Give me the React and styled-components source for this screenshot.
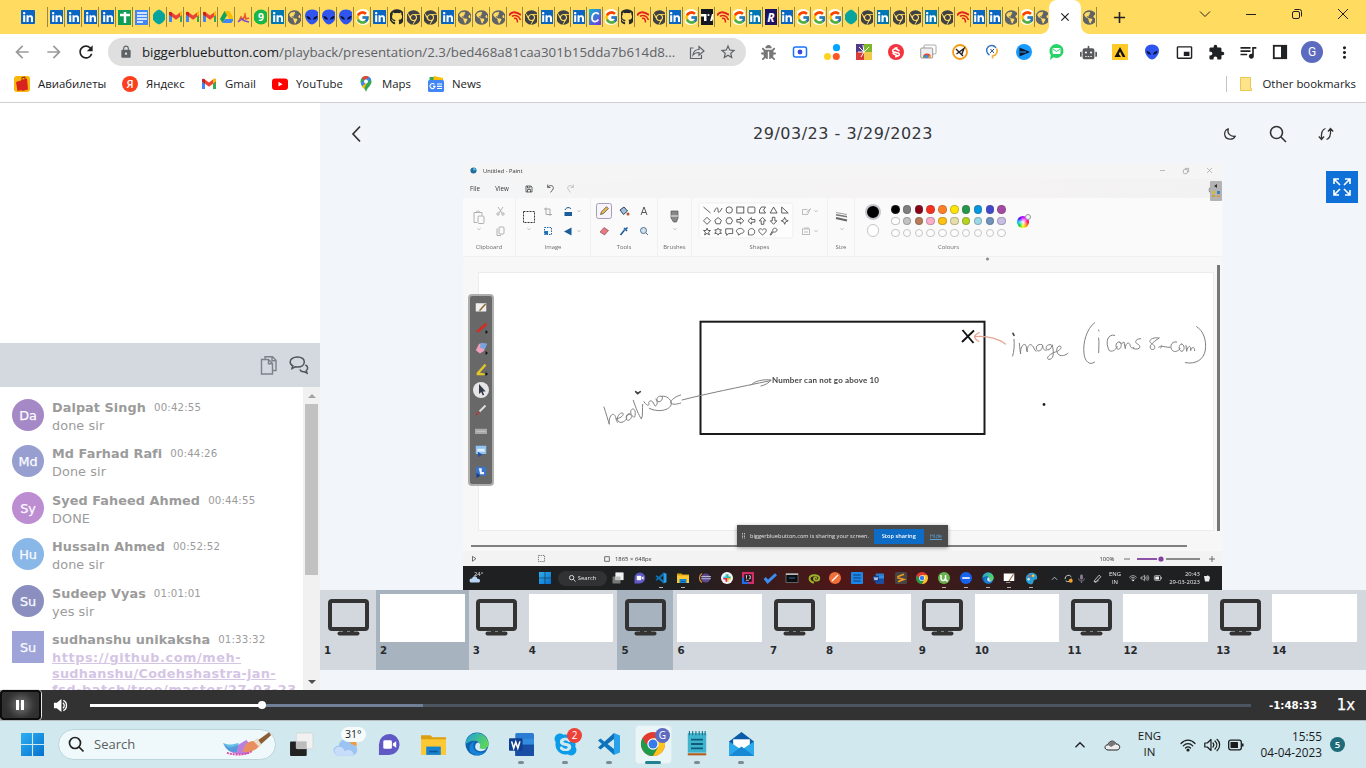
import React from "react";
import styled, { createGlobalStyle, css } from "styled-components";
import { FaLinkedin, FaGithub, FaChrome, FaGlobeAmericas, FaBug, FaRobot, FaSkype } from "react-icons/fa";
import { FcGoogle } from "react-icons/fc";
import {
  MdArrowBack, MdArrowForward, MdRefresh, MdLock, MdStarBorder, MdExtension,
  MdPictureInPictureAlt, MdQueueMusic, MdMoreVert, MdAdd, MdClose,
} from "react-icons/md";

const UI = `"Open Sans", "Noto Sans", sans-serif`;
const WEB = `"DejaVu Sans", sans-serif`;

const Global = createGlobalStyle`
  * { box-sizing: border-box; }
  body { margin: 0; background: #fff; font-family: ${UI}; overflow: hidden; }
  svg { display: block; flex: none; overflow: visible; }
`;

const Screen = styled.div`
  width: 1366px;
  height: 768px;
  display: flex;
  flex-direction: column;
  overflow: hidden;
`;

/* A centred box of fixed width, used in every bar. */
const Slot = styled.div`
  width: ${(p) => p.$w}px;
  height: ${(p) => (p.$h ? p.$h + "px" : "100%")};
  flex: none;
  display: flex;
  align-items: center;
  justify-content: center;
`;

/* ---------- small icons ---------- */
const I = ({ s = 16, w, h, box = "0 0 16 16", children, ...r }) => (
  <svg width={w || s} height={h || s} viewBox={box} fill="none" {...r}>{children}</svg>
);

const Gmail = ({ s = 16 }) => (
  <I s={s}>
    <path d="M1 4v9h3V7z" fill="#4285f4" /><path d="M15 4v9h-3V7z" fill="#34a853" />
    <path d="M1 4c0-1.4 1.4-1.6 2.3-1L8 6.6 12.7 3c.9-.6 2.3-.4 2.3 1v1.6L8 10.8 1 5.600z" fill="#ea4335" />
    <path d="M12 3.5v4l3-2.200V4c0-1.300-1.300-1.700-2.300-1z" fill="#fbbc04" /><path d="M1 4v1.500l3 2.200v-4C2.500 2.500 1 2.700 1 4z" fill="#c5221f" />
  </I>
);
const Sheets = () => <I><path d="M1 1h14v15H1z" fill="#109d58" /><path d="M3 6h10M8 3v11" stroke="#fff" strokeWidth="2.400" /></I>;
const Docs = () => <I><path d="M1 1h14v15H1z" fill="#4285f4" /><path d="M3 4h10M3 7h10M3 10h10M3 13h6" stroke="#fff" strokeWidth="1.500" /></I>;
const Hexa = () => <I><path d="M8 .5c3 1 4.500 3 6 5v5c-1.500 2-3 4-6 5-3-1-4.500-3-6-5v-5c1.500-2 3-4 6-5z" fill="#05a49d" /></I>;
const Drive = () => (
  <I><path d="M5.500 2h5L15 10h-5z" fill="#fbbc04" /><path d="M5.500 2 8 6.300 3.500 14 1 10z" fill="#12a25c" /><path d="M6 10h9l-2.500 4h-9z" fill="#4285f4" /></I>
);
const Runner = () => (
  <I><path d="M3 12 5 8l2 3 2-5 1 4 3-1" stroke="#e8552f" strokeWidth="1.600" /><path d="m2 13 4-3 3 2 4 1" stroke="#7a4fd0" strokeWidth="1.500" /><circle cx="9" cy="5" r="1.300" fill="#f08a24" /></I>
);
const Whats = () => (
  <I><circle cx="8" cy="8" r="7.500" fill="#19b648" /><text x="8" y="12" textAnchor="middle" fill="#fff" fontSize="10.500" fontWeight="700" fontFamily="Open Sans">9</text></I>
);
const Alien = ({ s = 16, c = "#2f55ee" }) => (
  <I s={s}><path d="M8 .5c5 0 7 3 7 6.500S11 15.500 8 15.500 1 10.500 1 7 3 .500 8 .500z" fill={c} /><path d="M2.500 7c2 0 4 1.500 4.500 3.500C4.500 11 2.700 9.500 2.500 7zM13.500 7c-2 0-4 1.500-4.500 3.500 2.500.500 4.300-1 4.500-3.500z" fill="#0a1030" /></I>
);
const RedWave = () => (
  <I><path d="M2 6.500C4 2.500 9 2 14 6" stroke="#e0231b" strokeWidth="2" /><path d="M5 7.500c2-2 7-1 8.500 3.500M7 9.500c2-1 3.500.5 3.500 4" stroke="#e0231b" strokeWidth="1.500" /></I>
);
const Canva = () => (
  <I><defs><linearGradient id="cv" x1="0" y1="0" x2="1" y2="1"><stop stopColor="#06c1cc" /><stop offset="1" stopColor="#7a2be2" /></linearGradient></defs>
    <rect width="16" height="16" rx="4" fill="url(#cv)" /><path d="M11.500 5.500C11 2.500 5 3.500 5 9c0 4.500 4.500 4.500 6.500 1.500" stroke="#fff" strokeWidth="1.700" /></I>
);
const Letter = ({ t, bg }) => (
  <I><rect width="16" height="16" fill={bg} /><text x="8" y="12.500" textAnchor="middle" fill="#fff" fontSize="12" fontStyle="italic" fontWeight="700" fontFamily="Open Sans">{t}</text></I>
);
const TV = () => <I><rect width="16" height="16" fill="#131722" /><path d="M2 5h5.500v7H5V7.500H2z" fill="#fff" /><circle cx="9.500" cy="6" r="1.100" fill="#fff" /><path d="M11 12h2.300l2-7H13z" fill="#fff" /></I>;

const InWrap = styled.span`
  display: flex;
  width: 14px;
  height: 14px;
  flex: none;
  color: ${(p) => p.$c};
  background: linear-gradient(#fff, #fff) center / 11px 11px no-repeat;
  align-items: center;
  justify-content: center;
`;
const White = styled.span`
  display: flex;
  flex: none;
  width: 16px;
  height: 16px;
  background: #fff;
  border-radius: 50%;
  align-items: center;
  justify-content: center;
`;

const FAVICONS = {
  in: <InWrap $c="#0a66c2"><FaLinkedin size={16} /></InWrap>,
  ib: <InWrap $c="#0077b5"><FaLinkedin size={16} /></InWrap>,
  sh: <Sheets />, dc: <Docs />, hx: <Hexa />, gm: <Gmail />, dr: <Drive />, rn: <Runner />, wa: <Whats />,
  gl: <FaGlobeAmericas size={15} color="#5f6368" />,
  al: <Alien />,
  gg: <White><FcGoogle size={15} /></White>,
  gh: <FaGithub size={16} color="#24292e" />,
  ch: <FaChrome size={15} color="#3f4145" />,
  rd: <RedWave />, cv: <Canva />, tv: <TV />, rr: <Letter t="R" bg="#1b1464" />,
};
const WIDE = "in in in in sh dc hx gm gm gm dr rn wa ib gl al al al gg in gh ch ch in gl gl gl".split(" ");
const NARROW = "rd ch in ch in cv gg gh rd ch in gg tv rd gg ib rr in gg gg gg hx ch ib ch ch ib ch rd in in gl gg".split(" ");

/* ---------- tab strip ---------- */
const TabStrip = styled.div`
  height: 34px;
  flex: none;
  background: #ffdc5f;
  display: flex;
  position: relative;
`;
const Tab = styled.div`
  width: ${(p) => p.$w}px;
  height: 34px;
  flex: none;
  display: flex;
  align-items: center;
  padding-left: ${(p) => p.$pad ?? 2}px;
  ${(p) => !p.$plain && css`
    background: linear-gradient(#9b8745, #9b8745) right top 7px / 1px 20px no-repeat;
  `}
`;
const Fav = styled.div`
  width: ${(p) => p.$w || 13}px;
  height: 16px;
  display: flex;
  align-items: center;
  justify-content: center;
  overflow: hidden;
`;
const ActiveTab = styled.div`
  width: 32px;
  height: 34px;
  flex: none;
  background: #fff;
  border-radius: 8px 8px 0 0;
  display: flex;
  align-items: center;
  justify-content: center;
  position: relative;
  &::before, &::after {
    content: "";
    position: absolute;
    bottom: 0;
    width: 8px;
    height: 8px;
  }
  &::before { left: -8px; background: radial-gradient(circle at 0 0, transparent 7.500px, #fff 8px); }
  &::after { right: -8px; background: radial-gradient(circle at 100% 0, transparent 7.500px, #fff 8px); }
`;
const Grow = styled.div`flex: 1;`;

function Tabs() {
  return (
    <TabStrip>
      <Tab $w={48} $pad={21}><Fav $w={14}>{FAVICONS.in}</Fav></Tab>
      {WIDE.map((k, i) => <Tab key={i} $w={17}><Fav>{FAVICONS[k]}</Fav></Tab>)}
      {NARROW.map((k, i) => <Tab key={i} $w={16}><Fav $w={12}>{FAVICONS[k]}</Fav></Tab>)}
      <Tab $w={14} $plain $pad={1}><Fav $w={12}>{FAVICONS.gl}</Fav></Tab>
      <ActiveTab><MdClose size={14} color="#222" /></ActiveTab>
      <Tab $w={16} $pad={2}><Fav $w={12}>{FAVICONS.gl}</Fav></Tab>
      <Slot $w={44}><MdAdd size={19} color="#222" /></Slot>
      <Grow />
      <Slot $w={46} $h={28}><I><path d="M3 5.500 8 10.500l5-5" stroke="#222" /></I></Slot>
      <Slot $w={46} $h={28}><I><path d="M3 8.500h10" stroke="#222" /></I></Slot>
      <Slot $w={46} $h={28}><I><rect x="3.500" y="5.500" width="7" height="7" rx="1.500" stroke="#222" /><path d="M5.500 3.500h5a2 2 0 0 1 2 2v5" stroke="#222" /></I></Slot>
      <Slot $w={46} $h={28}><I><path d="m3 3 10 10M13 3 3 13" stroke="#222" /></I></Slot>
    </TabStrip>
  );
}

/* ---------- address bar ---------- */
const Toolbar = styled.div`
  height: 36px;
  flex: none;
  display: flex;
  align-items: center;
  padding-left: 6px;
`;
const Omnibox = styled.div`
  width: 638px;
  height: 28px;
  margin-left: 6px;
  margin-right: 6px;
  border-radius: 14px;
  background: #dfdfdf;
  display: flex;
  align-items: center;
  padding-left: 10px;
`;
const Url = styled.div`
  width: 547px;
  font-size: 13.300px;
  white-space: nowrap;
  color: #5f6368;
  padding-left: 8px;
  letter-spacing: -0.010px;
  b { font-weight: 400; color: #202124; letter-spacing: -0.050px; }
`;
const Profile = styled.div`
  width: 22px;
  height: 22px;
  border-radius: 50%;
  background: #5c6bc0;
  color: #fff;
  display: flex;
  align-items: center;
  justify-content: center;
  font: 12px Roboto, sans-serif;
`;
const EXTENSIONS = [
  <FaBug size={15} color="#777" />,
  <I><rect x="1.500" y="3" width="13" height="10" rx="2" stroke="#1a73ff" strokeWidth="1.500" fill="#fff" /><circle cx="8" cy="8" r="2.400" fill="#3a49d8" /></I>,
  <I><circle cx="12.500" cy="3.700" r="3.600" fill="#00a4ff" /><circle cx="3.500" cy="12.500" r="3.500" fill="#ffd21f" /><circle cx="12.300" cy="12.500" r="3.500" fill="#ff5722" /></I>,
  <I><path d="M0 0h8v8H0z" fill="#503a86" /><path d="M8 0h8v8H8z" fill="#7cb62d" /><path d="M0 8h8v8H0z" fill="#d93a3a" /><path d="M8 8h8v8H8z" fill="#f2c74c" /><path d="M3 3l5 5M7 1l1 7 5-5M2 8h6M8 8l-3 5" stroke="#fff" /></I>,
  <I><circle cx="8" cy="8" r="8" fill="#f5333f" /><path d="M9.500 3.500 5.300 5.600c-1 .6-1 1.500 0 2.200l5.400 1.500c1 .6 1 1.600 0 2.200l-3.500 1.500M6.500 4l5 3M4.500 9l5 3" stroke="#fff" strokeWidth="1.500" /></I>,
  <I><rect x="4" y="1" width="12" height="9" rx="1" fill="#fff" stroke="#aaa" /><rect x=".7" y="4" width="12" height="10" rx="1" fill="#eee" stroke="#999" /><path d="M3 13.500a4 4 0 0 1 8 0" fill="#ea4335" /><path d="M3 13.500a4 4 0 0 1 1.200-2.800l1.500 2.800z" fill="#34a853" /><path d="M11 13.500a4 4 0 0 0-1-2.500l-2 2.500z" fill="#fbbc04" /><circle cx="7" cy="12.500" r="1.700" fill="#4285f4" /></I>,
  <I><circle cx="8" cy="8" r="7" stroke="#f59a16" strokeWidth="1.800" fill="#fff" /><path d="m4 5 7 7M4.500 10 12 4.500 9.500 11" stroke="#222" strokeWidth="1.400" /></I>,
  <I><path d="M5.500 11A5 5 0 1 1 12 4" stroke="#2e72c8" strokeWidth="1.400" /><path d="M12.500 4.500A5 5 0 0 1 8.500 12v2.500" stroke="#f3ab35" strokeWidth="1.600" /><path d="m6 9 4-4M6.500 5l3.500 4" stroke="#274f88" /></I>,
  <I><circle cx="8" cy="8" r="8" fill="#189aff" /><path d="M3.500 3.500 14 8 3.500 12.500z" fill="#0b1a33" /><path d="M4 8h6" stroke="#4f9fe8" /></I>,
  <I><path d="M8.500 0a7 7 0 1 1-3 13.300L2 16l.8-5A7 7 0 0 1 8.500 0z" fill="#25d366" /><rect x="4.500" y="4" width="8" height="6" rx="1" fill="#fff" /><path d="m5 5 3.500 2.500L12 5" stroke="#25d366" /></I>,
  <FaRobot size={17} color="#58595b" />,
  <I><rect width="16" height="16" fill="#ffc928" /><path d="M2.500 13 8 3l5.500 10h-2.800L8 7.500l-1.200 2.400L9 13z" fill="#111" /></I>,
  <Alien />,
  <MdPictureInPictureAlt size={17} color="#202124" />,
  <MdExtension size={17} color="#202124" />,
  <MdQueueMusic size={20} color="#202124" />,
  <I><rect x="1.800" y="1.800" width="12.400" height="12.400" stroke="#202124" strokeWidth="1.800" /><path d="M9 1h6v14H9z" fill="#202124" /></I>,
  <Profile>G</Profile>,
  <MdMoreVert size={19} color="#202124" />,
];

function AddressBar() {
  return (
    <Toolbar>
      <Slot $w={32}><MdArrowBack size={20} color="#9a9a9a" /></Slot>
      <Slot $w={32}><MdArrowForward size={20} color="#9a9a9a" /></Slot>
      <Slot $w={32}><MdRefresh size={20} color="#202124" /></Slot>
      <Omnibox>
        <Slot $w={16}><MdLock size={14} color="#5f6368" /></Slot>
        <Url><b>biggerbluebutton.com</b>/playback/presentation/2.3/bed468a81caa301b15dda7b614d8...</Url>
        <Slot $w={31}><I><path d="M4.500 4H1.500v10.500h11V11M4 11c.5-4 3-5.500 6-5.500V2.500L15 7l-5 4.300V8.500C7.500 8.500 5.500 9 4 11z" stroke="#5f6368" strokeWidth="1.200" /></I></Slot>
        <Slot $w={31}><MdStarBorder size={18} color="#5f6368" /></Slot>
      </Omnibox>
      {EXTENSIONS.map((e, i) => <Slot key={i} $w={32}>{e}</Slot>)}
    </Toolbar>
  );
}

/* ---------- bookmarks ---------- */
const Bookmarks = styled.div`
  height: 33px;
  flex: none;
  border-bottom: 1px solid #cfcfcf;
  display: flex;
  align-items: center;
  padding: 0 10px 4px 14px;
  font-size: 11.400px;
  color: #202124;
`;
const Bookmark = styled.div`
  width: ${(p) => (p.$w ? p.$w + "px" : "auto")};
  display: flex;
  align-items: center;
  gap: 8px;
  white-space: nowrap;
`;
const Label = styled.span`
  padding-bottom: 2px;
`;
const Rule = styled.div`
  width: 1px;
  height: 16px;
  background: #c4c4c4;
  margin-right: 11px;
`;
const Bags = () => <I><rect width="16" height="16" rx="3" fill="#f6b80c" /><path d="M2 6l5-1.500 1 9.500-4.500 1zM7 4l6-1.500 1 11-6 1.500z" fill="#d8231e" /><path d="M8 3.800V1.500l3-.5v2.200" stroke="#a2160f" /></I>;
const Yandex = () => <I><circle cx="8" cy="8" r="8" fill="#fc3f1d" /><text x="8" y="12" textAnchor="middle" fill="#fff" fontSize="11" fontWeight="600" fontFamily="Open Sans">Я</text></I>;
const YouTube = () => <I><rect y="2.500" width="16" height="11.500" rx="3" fill="#f00" /><path d="m6.500 5.800 4 2.400-4 2.400z" fill="#fff" /></I>;
const Maps = () => (
  <I><path d="M8 0a5.500 5.500 0 0 1 5.500 5.500C13.500 9.500 9.500 11 8 16c-1.500-5-5.500-6.500-5.500-10.500A5.500 5.500 0 0 1 8 0z" fill="#34a853" /><path d="M8 0a5.500 5.500 0 0 0-4.200 2L6.500 4.500 11 1A6 6 0 0 0 8 0z" fill="#ea4335" /><path d="M11 1a5.500 5.500 0 0 1 2 2.500L4 10.500 2.800 7z" fill="#4285f4" /><path d="m4 10.500 5.500-5L6 13z" fill="#fbbc04" /><circle cx="8" cy="5.500" r="2" fill="#fff" /></I>
);
const News = () => (
  <I><path d="M1.500 1h9v5h-9z" fill="#34a853" /><path d="m6 0 9 2v4H5z" fill="#fbbc04" /><rect y="4" width="16" height="12" rx="1.500" fill="#4285f4" /><path d="M6.500 8.500a2.500 2.500 0 1 0 .5 1.800H5M9 8h5M9 10.300h5M9 12.500h5" stroke="#fff" strokeWidth="1.200" /></I>
);
const Folder = () => <I><path d="M2.500 1.500h10v11h1v2h-11z" fill="#ffe38b" stroke="#e8c84e" /></I>;

const BookmarkBar = () => (
  <Bookmarks>
    <Bookmark $w={108}><Bags /><Label>Авиабилеты</Label></Bookmark>
    <Bookmark $w={79}><Yandex /><Label>Яндекс</Label></Bookmark>
    <Bookmark $w={71}><Gmail /><Label>Gmail</Label></Bookmark>
    <Bookmark $w={86}><YouTube /><Label>YouTube</Label></Bookmark>
    <Bookmark $w={70}><Maps /><Label>Maps</Label></Bookmark>
    <Bookmark $w={70}><News /><Label>News</Label></Bookmark>
    <Grow />
    <Rule />
    <Bookmark><Folder /><Label>Other bookmarks</Label></Bookmark>
  </Bookmarks>
);

/* ---------- chat panel ---------- */
const Page = styled.div`
  height: 587px;
  flex: none;
  display: flex;
  font-family: ${WEB};
`;
const Aside = styled.div`
  width: 320px;
  display: flex;
  flex-direction: column;
  background: #fff;
`;
const Webcam = styled.div`height: 240px; flex: none;`;
const AsideBar = styled.div`
  height: 44px;
  flex: none;
  background: #d4d9e0;
  display: flex;
  justify-content: flex-end;
  align-items: center;
  gap: 10px;
  padding-right: 11px;
`;
const Chat = styled.div`
  height: 303px;
  flex: none;
  display: flex;
  overflow: hidden;
`;
const Messages = styled.div`
  flex: 1;
  padding: 12px 0 0 12px;
`;
const Message = styled.div`
  display: flex;
  height: 46.400px;
  gap: 8px;
`;
const Avatar = styled.div`
  width: 32px;
  height: 32px;
  flex: none;
  border-radius: ${(p) => (p.$square ? 0 : "50%")};
  background: ${(p) => p.$c};
  color: #fbfbff;
  font-size: 12.800px;
  -webkit-text-stroke: 0.250px #fbfbff;
  display: flex;
  align-items: center;
  justify-content: center;
  padding-top: 1px;
`;
const Who = styled.div`
  height: 19px;
  line-height: 17px;
  display: flex;
  gap: 8px;
  white-space: nowrap;
  font-size: 12.800px;
  font-weight: 700;
  color: #9b9b9b;
  letter-spacing: 0.080px;
`;
const When = styled.span`
  font-size: 10.240px;
  font-weight: 400;
  letter-spacing: 0.150px;
`;
const Said = styled.div`
  font-size: 12.800px;
  line-height: 16px;
  color: #9b9b9b;
  letter-spacing: 0.100px;
`;
const Link = styled.a`
  display: block;
  font-weight: 700;
  color: #d5c5e5;
  text-decoration: underline;
  white-space: nowrap;
  letter-spacing: ${(p) => p.$ls}px;
`;
const Scroll = styled.div`
  width: 17px;
  background: #f1f1f1;
  display: flex;
  flex-direction: column;
  align-items: center;
  justify-content: space-between;
`;
const Thumb = styled.div`
  width: 13px;
  height: 171px;
  background: #c1c1c1;
`;
const CHAT = [
  ["Da", "#a589c6", "Dalpat Singh", "00:42:55", "done sir"],
  ["Md", "#979fd0", "Md Farhad Rafi", "00:44:26", "Done sir"],
  ["Sy", "#bd8dd1", "Syed Faheed Ahmed", "00:44:55", "DONE"],
  ["Hu", "#89b7e8", "Hussain Ahmed", "00:52:52", "done sir"],
  ["Su", "#8a8fbf", "Sudeep Vyas", "01:01:01", "yes sir"],
  ["Su", "#9ea4d7", "sudhanshu unikaksha", "01:33:32", null],
];

const ChatPanel = () => (
  <Aside>
    <Webcam />
    <AsideBar>
      <I s={20} box="0 0 20 20" stroke="#7c8289" strokeWidth="1.400"><path d="M6 4V1.700h7.500L17 5.200v10.300h-3M13 1.900V5.700h3.700" /><path d="M2.500 4.500h7l4 4v10.500h-11zM9.500 4.700v4h4" /></I>
      <I s={20} box="0 0 20 20" stroke="#4f5459" strokeWidth="1.500"><path d="M8.500 2c4.300 0 6.800 2.200 6.800 5s-2.500 5-6.800 5c-.8 0-1.500 0-2.200-.2L3 13.500l.8-2.800C2 10 1.200 8.600 1.200 7c0-2.800 3-5 7.300-5z" /><path d="M16.300 10c2.800 1.200 3 4 1 5.500l.7 2.500-2.700-1.300c-2.300.3-3.800-.5-4.500-2.200" /></I>
    </AsideBar>
    <Chat>
      <Messages>
        {CHAT.map(([ini, c, name, at, text], i) => (
          <Message key={i}>
            <Avatar $c={c} $square={!text}>{ini}</Avatar>
            <div>
              <Who>{name}<When>{at}</When></Who>
              <Said>
                {text || (
                  <>
                    <Link $ls={0.6}>https://github.com/meh-</Link>
                    <Link $ls={0.32}>sudhanshu/Codehshastra-jan-</Link>
                    <Link $ls={0.6}>fsd-batch/tree/master/27-03-23</Link>
                  </>
                )}
              </Said>
            </div>
          </Message>
        ))}
      </Messages>
      <Scroll>
        <Slot $w={17} $h={17}><I s={8} box="0 0 8 8"><path d="M0 6h8L4 2z" fill="#a3a3a3" /></I></Slot>
        <Thumb />
        <Grow />
        <Slot $w={17} $h={17}><I s={8} box="0 0 8 8"><path d="M0 2h8L4 6z" fill="#505050" /></I></Slot>
      </Scroll>
    </Chat>
  </Aside>
);

/* ---------- presentation ---------- */
const Stage = styled.div`
  flex: 1;
  background: #f2f5f9;
  display: flex;
  flex-direction: column;
  position: relative;
`;
const StageHead = styled.div`
  height: 61px;
  flex: none;
  display: flex;
  align-items: center;
  padding: 0 16px 0 17px;
  font-size: 16px;
  color: #34363a;
`;
const StageTitle = styled.div`
  flex: 1;
  text-align: center;
  padding-left: 103px;
  letter-spacing: 0.500px;
`;
const FullButton = styled.div`
  position: absolute;
  right: 8px;
  top: 68px;
  width: 32px;
  height: 32px;
  background: #0f70d7;
  display: flex;
  align-items: center;
  justify-content: center;
`;
const Thumbs = styled.div`
  height: 80px;
  flex: none;
  background: #d3d8df;
  display: flex;
`;
const ThumbItem = styled.div`
  width: ${(p) => (p.$screen ? 56 : 92.7)}px;
  height: 80px;
  flex: none;
  padding: 4px;
  background: ${(p) => (p.$on ? "#a7b4bf" : "transparent")};
  font-size: 10.240px;
  font-weight: 700;
  color: #26292d;
`;
const SlideBox = styled.div`
  height: 48px;
  margin-bottom: 2px;
  display: flex;
  align-items: center;
  justify-content: center;
  padding-bottom: ${(p) => (p.$screen ? 1 : 0)}px;
  background: ${(p) => (p.$screen ? "transparent" : "#fff")};
`;
const Monitor = () => (
  <svg width="41" height="37" viewBox="0 0 41 37" fill="none">
    <rect x="2" y="2" width="37" height="28" rx="2" stroke="#333" strokeWidth="4" />
    <path d="M17 31v4M24 31v4" stroke="#333" strokeWidth="4" />
    <rect x="9.500" y="32.500" width="22" height="4" rx="2" fill="#333" />
  </svg>
);

/* ---------- shared screen: Paint window ---------- */
const Video = styled.div`
  width: 759px;
  height: 426px;
  margin-left: 143px;
  flex: none;
  display: flex;
  flex-direction: column;
  position: relative;
  font-family: ${UI};
  color: #333;
  background: #f6f6f7;
  filter: blur(0.300px);
  overflow: hidden;
`;
const PaintTitle = styled.div`
  height: 15px;
  flex: none;
  display: flex;
  align-items: center;
  padding: 0 1px 2px 6px;
  background: #f5f5f6;
  font-size: 5.700px;
`;
const PaintMenu = styled.div`
  height: 19px;
  flex: none;
  display: flex;
  align-items: center;
  background: linear-gradient(90deg, #f4f5f6, #f5f3f3 60%, #f3f2f2);
  font-size: 6.200px;
`;
const Ribbon = styled.div`
  height: 59px;
  flex: none;
  display: flex;
  background: #fafafa;
  border-bottom: 1px solid #f0f0f0;
`;
const Group = styled.div`
  width: ${(p) => p.$w}px;
  flex: none;
  border-right: 1px solid ${(p) => (p.$last ? "transparent" : "#f0f0f0")};
  font-size: 5.900px;
  color: #6c6c6c;
  text-align: center;
  line-height: 13px;
`;
const GroupBody = styled.div`
  height: 43px;
  display: flex;
`;
const Workspace = styled.div`
  height: 294px;
  flex: none;
  display: flex;
  flex-direction: column;
  padding: 15px 0 0 15px;
  background: #f7f7f8;
  position: relative;
`;
const Sheet = styled.div`
  width: 736px;
  height: 259px;
  background: #fff;
  border: 1px solid #ececec;
`;
const HBar = styled.div`
  position: absolute;
  left: 8px;
  bottom: 4px;
  width: 716px;
  height: 2.500px;
  background: #808080;
`;
const VBar = styled.div`
  position: absolute;
  right: 2px;
  top: 8px;
  width: 3px;
  height: 266px;
  background: #777;
`;
const Status = styled.div`
  height: 15px;
  flex: none;
  display: flex;
  align-items: center;
  background: #f4f3f3;
  font-size: 5.900px;
`;
const PaletteBar = styled.div`
  position: absolute;
  left: 5px;
  top: 130px;
  width: 26px;
  height: 192px;
  border: 2px solid #adafae;
  border-radius: 4px;
  background: #686868;
  display: flex;
  flex-direction: column;
  align-items: center;
  padding-top: 1px;
`;
const Share = styled.div`
  position: absolute;
  left: 274px;
  top: 361px;
  width: 211px;
  height: 22px;
  background: #4b4b4b;
  box-shadow: 0 1px 4px rgba(0, 0, 0, 0.4);
  display: flex;
  align-items: center;
  font-size: 5.650px;
  color: #e4e4e4;
  white-space: nowrap;
`;
const StopButton = styled.div`
  width: 50px;
  height: 15px;
  background: #0d6cc6;
  color: #fff;
  font-weight: 600;
  display: flex;
  align-items: center;
  justify-content: center;
  margin-right: 6px;
`;
const Hide = styled.span`
  color: #5aa0d8;
  text-decoration: underline;
`;
const Grip = styled.div`
  width: 13px;
  padding-left: 5px;
`;
const CornerPanel = styled.div`
  position: absolute;
  right: 0;
  top: 17px;
`;

const Chev = ({ x, y }) => <path d={`M${x - 1.700} ${y - .8}l1.700 1.600 1.700-1.600`} stroke="#aaa" strokeWidth=".7" />;
const SHAPES = [
  (x, y) => <path d={`M${x - 3.500} ${y - 3}l7 6`} />,
  (x, y) => <path d={`M${x - 4} ${y + 2}c3-7 4-4 4-1s2 1 4-3`} />,
  (x, y) => <circle cx={x} cy={y} r="3.200" />,
  (x, y) => <rect x={x - 3.500} y={y - 3} width="7" height="6" />,
  (x, y) => <rect x={x - 3.500} y={y - 3} width="7" height="6" rx="1" />,
  (x, y) => <path d={`M${x - 3} ${y + 3}v-3l2-3h4l-2 3 2 3z`} />,
  (x, y) => <path d={`M${x - 3.500} ${y + 3}l3.500-6 3.500 6z`} />,
  (x, y) => <path d={`M${x - 3} ${y + 3}v-6l6.500 6z`} />,
  (x, y) => <path d={`M${x - 3.500} ${y}l3.500-3.500 3.500 3.500-3.500 3.500z`} />,
  (x, y) => <path d={`M${x - 3.300} ${y - .5}l3.300-2.700 3.300 2.700-1.300 3.500h-4z`} />,
  (x, y) => <path d={`M${x - 3.300} ${y}l1.600-3h3.400l1.600 3-1.600 3h-3.400z`} />,
  (x, y) => <path d={`M${x - 3.500} ${y - 1.300}h3.500v-2l3.500 3.300-3.500 3.300v-2h-3.500z`} />,
  (x, y) => <path d={`M${x + 3.500} ${y - 1.300}h-3.500v-2l-3.500 3.300 3.500 3.300v-2h3.500z`} />,
  (x, y) => <path d={`M${x - 1.300} ${y + 3.500}v-3.500h-2l3.300-3.500 3.300 3.500h-2v3.500z`} />,
  (x, y) => <path d={`M${x - 1.300} ${y - 3.500}v3.500h-2l3.300 3.500 3.300-3.500h-2v-3.500z`} />,
  (x, y) => <path d={`M${x - 3.500} ${y}l2.500-1 1-2.500 1 2.500 2.500 1-2.500 1-1 2.500-1-2.500z`} />,
  (x, y) => <path d={`M${x} ${y - 3.500}l1 2.400h2.500l-1.900 1.700.8 2.700-2.400-1.500-2.400 1.500.8-2.700-1.900-1.700h2.500z`} />,
  (x, y) => <path d={`M${x} ${y - 3.500}l1 1.700h2.300l-1.200 1.800 1.200 1.800h-2.300l-1 1.700-1-1.700h-2.300l1.200-1.800-1.200-1.800h2.300z`} />,
  (x, y) => <path d={`M${x - 3.500} ${y - 2.800}h7v4.800h-4l-2 1.700v-1.700h-1z`} />,
  (x, y) => <path d={`M${x - 2} ${y + 3.500}v-1.700c-4-2-1-5 2-5s6 4 1 5z`} />,
  (x, y) => <path d={`M${x - 3} ${y + 3.200}v-3.200c0-4 6.300-4 6.300 0s-3.300 3.500-6.300 3.200z`} />,
  (x, y) => <path d={`M${x} ${y + 3.300}c-7-4.500-2.500-8 0-5 2.500-3 7 .5 0 5z`} />,
  (x, y) => <path d={`M${x - 3.500} ${y + 3.300}l2.500-4.300c0-3 4-3 4.500-1 0 2-2 3-4 2.300l-2 3z`} />,
];

const ColourRow = styled.div`
  display: flex;
  gap: 3.330px;
  height: 11.900px;
`;
const Dot = styled.div`
  width: 8.500px;
  height: 8.500px;
  border-radius: 50%;
  flex: none;
  background: ${(p) => p.$c || "#fcfcfc"};
  border: 1px solid ${(p) => (p.$c ? "rgba(90,90,90,.35)" : "#c6c6c6")};
`;
const BigDots = styled.div`
  width: 36px;
  display: flex;
  flex-direction: column;
  align-items: center;
  gap: 4px;
  padding-top: 6px;
`;
const BigDot = styled.div`
  width: ${(p) => p.$s}px;
  height: ${(p) => p.$s}px;
  border-radius: 50%;
  background: ${(p) => p.$c};
  border: ${(p) => p.$b}px solid #c5c5ca;
`;
const Swatches = styled.div`
  width: 126px;
  padding-top: 7px;
`;
const WheelBox = styled.div`
  display: flex;
  padding-top: 18px;
`;
const Wheel = styled.div`
  width: 12px;
  height: 12px;
  border-radius: 50%;
  background: radial-gradient(#fff, transparent 60%), conic-gradient(#c0f, #f0f, #f04, #f80, #ff0, #0c4, #0cf, #40f, #c0f);
`;
const WheelKnob = styled.div`
  width: 6px;
  height: 6px;
  margin: -2px 0 0 -4px;
  border-radius: 50%;
  background: #f4f4f4;
  border: 1px solid #999;
`;
const COLOURS = [
  ["#000", "#7f7f7f", "#880015", "#f5301f", "#ff7f27", "#ffe600", "#22984a", "#0098e0", "#3f48cc", "#a349a4"],
  ["#fff", "#c3c3c3", "#b97a57", "#ffaec9", "#ffc20e", "#e6dfa8", "#b5d51d", "#99d9ea", "#7092be", "#c8bfe7"],
  Array(10).fill(null),
];

function PaintRibbon() {
  return (
    <Ribbon>
      <Group $w={53}>
        <GroupBody>
          <svg width="52" height="43" fill="none" stroke="#a9a9a9" strokeWidth=".9">
            <path d="M14 24.500h-3v-10h8v3M13 14.500c0-2 4-2 4 0" /><rect x="15" y="18" width="6" height="7.500" rx="1" />
            <path d="M35 9l4 6M40 9l-4 6" /><circle cx="35" cy="16" r="1.200" /><circle cx="40" cy="16" r="1.200" />
            <rect x="36" y="29" width="5" height="7" rx="1" /><path d="M38 37.500h-4v-7" />
            <Chev x={16} y={31} />
          </svg>
        </GroupBody>
        Clipboard
      </Group>
      <Group $w={75}>
        <GroupBody>
          <svg width="74" height="43" fill="none">
            <g transform="translate(-1 0)">
              <rect x="8.500" y="13.500" width="11" height="11" stroke="#333" strokeDasharray="2 1" />
              <path d="M31 9.500v7h6M29 11h6v7" stroke="#aaa" /><Chev x={14} y={31} />
              <rect x="29.500" y="29.500" width="7" height="7" stroke="#1f6db5" strokeDasharray="1.500 1" /><rect x="29.500" y="33" width="3.500" height="3.500" fill="#1f6db5" />
              <path d="M50 12c1-3 5-3 6-1" stroke="#17507f" /><path d="M49.500 14h7.500v4h-7.500z" fill="#1b5c9a" />
              <path d="M49 33.500 56.500 29.500v8z" fill="#1b5c9a" /><Chev x={64} y={13} /><Chev x={64} y={33} />
            </g>
          </svg>
        </GroupBody>
        Image
      </Group>
      <Group $w={67}>
        <GroupBody>
          <svg width="66" height="43" fill="none">
            <rect x="5.500" y="5.500" width="15" height="15" rx="2" stroke="#a99bbd" fill="#f7f4fa" />
            <path d="m9.500 16.500 1-2.800 5-5 1.900 1.900-5 5z" fill="#e9b949" stroke="#444" strokeWidth=".7" />
            <path d="m29 12 4-3 3.500 4-4 3.500z" fill="#a7bdd4" stroke="#26486b" /><circle cx="37" cy="16" r="1.500" fill="#b8532a" />
            <path d="M50 17l3-8 3 8M51 14.500h4" stroke="#444" strokeWidth=".9" />
            <path d="m9 34 4-4.500 4.500 3-4 4.500z" fill="#e67883" stroke="#7b434a" strokeWidth=".6" />
            <path d="m29.500 37 4-5M33 30l3 3M34.500 31.500l2-2" stroke="#1c5c9c" strokeWidth="1.600" />
            <circle cx="52.500" cy="32.500" r="3" fill="#cfe2f3" stroke="#55708a" /><path d="m55 35 2 2" stroke="#55708a" />
          </svg>
        </GroupBody>
        Tools
      </Group>
      <Group $w={34}>
        <GroupBody>
          <svg width="33" height="43" fill="none">
            <path d="M13 13h7v7l-1.500 4h-3L13 20z" fill="#888" stroke="#555" strokeWidth=".7" /><path d="M13 18h7" stroke="#f4f4f4" /><Chev x={17} y={31} />
          </svg>
        </GroupBody>
        Brushes
      </Group>
      <Group $w={136}>
        <GroupBody>
          <svg width="135" height="43" fill="none" stroke="#505050" strokeWidth=".9">
            <rect x="7" y="5" width="94" height="35" rx="2" fill="#fdfdfd" stroke="#ededed" />
            {SHAPES.map((f, i) => <React.Fragment key={i}>{f(15 + (i % 8) * 11.1, 12 + Math.floor(i / 8) * 10.8)}</React.Fragment>)}
            <path d="M110.500 16.500v-5h5M110.500 16.500h5l3-6-4 4" stroke="#b5b5b5" /><rect x="110.500" y="31" width="7" height="5.500" stroke="#b5b5b5" />
            <path d="M112 34h4M112 30h5" stroke="#b5b5b5" /><Chev x={124} y={13} /><Chev x={124} y={33} />
          </svg>
        </GroupBody>
        Shapes
      </Group>
      <Group $w={27}>
        <GroupBody>
          <svg width="26" height="43" fill="none">
            <path d="M8 14.500l11 2" stroke="#888" strokeWidth=".8" /><path d="M8 16.800l11 2" stroke="#777" strokeWidth="1.600" /><path d="M8 20l11 2.500" stroke="#666" strokeWidth="2.200" /><Chev x={14} y={31} />
          </svg>
        </GroupBody>
        Size
      </Group>
      <Group $w={188} $last>
        <GroupBody>
          <BigDots><BigDot $s={16} $c="#000" $b={2} /><BigDot $s={12.5} $c="#fff" $b={1} /></BigDots>
          <Swatches>
            {COLOURS.map((row, i) => <ColourRow key={i}>{row.map((c, j) => <Dot key={j} $c={c} />)}</ColourRow>)}
          </Swatches>
          <WheelBox><Wheel /><WheelKnob /></WheelBox>
        </GroupBody>
        Colours
      </Group>
    </Ribbon>
  );
}

const Board = () => (
  <svg width="734" height="257" viewBox="479 273 734 257" fill="none">
    <rect x="700.500" y="321.700" width="284" height="112.300" stroke="#1a1a1a" strokeWidth="2" />
    <path d="M962.500 330l11 13M974 330.500l-12 11.500" stroke="#111" strokeWidth="1.900" />
    <text x="772" y="383" fontSize="8" fontWeight="700" fontFamily="Lato" fill="#444" textLength="107">Number can not go above 10</text>
    <g stroke="#808080" strokeLinecap="round">
      <path d="M682 400C705 394 740 387 771 380.500M751 385c3-4 13-6 20-5-2 3-6 5-10 6" />
      <g transform="translate(460 285) scale(.3333)" strokeWidth="3">
        <path d="M432 366C438 385 444 405 448 418C446 400 452 388 460 388C468 390 468 405 472 412" />
        <path d="M468 402C482 400 494 390 488 384C480 382 468 396 474 408C480 416 492 412 500 402C494 392 508 380 512 390C506 384 496 394 500 404C506 410 514 402 516 392" />
        <path d="M520 396C512 392 508 376 518 372C526 372 528 384 524 396M520 346C528 370 536 390 544 402C550 392 546 370 548 358" />
        <path d="M552 350C558 362 570 366 566 352C572 342 580 350 584 362C590 366 596 352 588 342" />
        <path d="M606 334C594 330 586 342 594 350C604 352 610 340 606 334C620 332 632 342 634 354C636 372 600 386 568 370" />
        <path d="M662 330C648 334 632 344 632 354C640 360 650 358 662 354" />
        <path d="M527 320L533 326L541 320" strokeWidth="5" stroke="#444" />
      </g>
      <g transform="translate(940 310) scale(.3333)" strokeWidth="3">
        <path d="M222 88c2 17 0 37-4 50M238 100c2 15 2 25 4 32-2-20 8-32 14-28 6 6 2 20 6 22-2-18 8-26 14-20 8 6 6 16 12 18M306 104c-14-4-22 8-14 18 8 4 16-6 16-16 0 10 6 18 12 14M332 104c-14-2-18 12-8 16 10-2 12-14 12-16 8 26 4 46-10 44-10-4 4-16 20-22 14-4 22-14 14-18-10 0-14 16-4 26 10 6 20 2 28-4" />
        <path d="M464 38c-24 17-36 62-32 92 2 25 18 38 32 26M476 60l1 3M476 84c2 16 0 31 0 44" />
        <path d="M524 76C504 70 494 96 508 122C516 126 526 122 532 110M538 96C526 94 524 116 536 118C546 114 546 98 538 96C544 104 548 98 552 96L556 116C556 100 566 94 570 104C572 114 576 116 582 112M602 86C588 86 582 96 592 102C606 108 600 122 580 116" />
        <path d="M656 84C638 80 622 92 634 100C650 108 646 122 634 118C624 110 636 98 658 84M656 112c8-6 14-4 6 2M664 108c8 2 16 4 26 4" />
        <path d="M710 96c-18-4-22 18-12 26 8 6 18 0 22-6M724 102c-10 2-8 22 2 22 10-4 8-22-2-22M738 106l2 18c2-12 8-18 12-12v10c4-12 12-14 12 0" />
        <path d="M770 50c20 12 30 40 26 70-4 28-28 44-60 38" />
        <path d="m219 70 3 6" strokeWidth="5" stroke="#444" />
        <path d="M196 102c-16-14-51-26-92-22M118 68c-10 4-16 10-14 14 2 6 8 10 12 12" stroke="#e5a794" strokeWidth="4" />
      </g>
    </g>
    <circle cx="1044" cy="404.500" r="1.400" fill="#222" />
    <circle cx="987.500" cy="259" r="1.500" fill="#888" />
  </svg>
);

const TOOLS = [
  <I s={12}><rect x="1" y="3" width="14" height="11" fill="#eee" /><path d="m6 13 8-9" stroke="#8b6a35" strokeWidth="2" /></I>,
  <I s={13}><path d="m1 13 12-11 2 3L4 14z" fill="#d62b22" /><path d="M13 11v5l3-2.500z" fill="#111" /></I>,
  <I s={13}><path d="M1 10 5 2h9l-3 9-5 3z" fill="#ef9fbb" /><path d="m6 7 1-6 8 1-3 7z" fill="#7aa4e0" /><path d="M13 11v5l3-2.500z" fill="#111" /></I>,
  <I s={13}><path d="M2 12 12 1l2 2-8 9 6 1v2H2z" fill="#e3c526" /><path d="M13 11v5l3-2.500z" fill="#111" /></I>,
  <I s={16}><circle cx="8" cy="8" r="8" fill="#e6e6e6" /><path d="M6 2v10l2.200-2 1.500 3.500 1.500-.7L9.700 9.500h3z" fill="#333b49" /></I>,
  <I s={12}><path d="m1 15 6-6" stroke="#b33" strokeWidth="1.500" /><path d="m6 10 8-8" stroke="#ddd" strokeWidth="2.500" /></I>,
  <I s={12}><rect x="0" y="5" width="16" height="7" fill="#a9a9a9" /><path d="M2 8.500h12" stroke="#ccc" /></I>,
  <I s={12}><rect x="1" y="1" width="14" height="11" fill="#8fc3f0" /><path d="M3 5h10v4H3z" fill="#d9edfa" /><path d="m4 9 6 4-6 3z" fill="#2453a0" /></I>,
  <I s={12}><rect x="1" y="1" width="14" height="12" fill="#3b74c8" /><path d="M5 3h4v5h3v3H7z" fill="#f0f5ff" /><path d="m2 9 5 4-5 3z" fill="#163c80" /></I>,
];

/* ---------- shared screen: its taskbar ---------- */
const MiniBar = styled.div`
  height: 24px;
  flex: none;
  display: flex;
  align-items: center;
  background:
    radial-gradient(ellipse 190px 60px at 400px 12px, rgba(105, 18, 18, 0.75), transparent),
    linear-gradient(#1e2021, #1e2021);
  color: #ececec;
  font-size: 5.900px;
`;
const MiniSearch = styled.div`
  width: 49px;
  height: 15px;
  border-radius: 8px;
  background: #303233;
  display: flex;
  align-items: center;
  justify-content: center;
  gap: 2px;
`;
const MiniText = styled.div`
  width: ${(p) => p.$w}px;
  text-align: ${(p) => p.$a || "center"};
  line-height: 8px;
  white-space: nowrap;
`;
const MiniTemp = styled(MiniText)`
  margin-left: -12px;
  padding-bottom: 8px;
`;
const WinLogo = ({ s = 12 }) => (
  <I s={s} box="0 0 24 24"><defs><linearGradient id="wl" x1="0" y1="0" x2="1" y2="1"><stop stopColor="#2db0f0" /><stop offset="1" stopColor="#0670cf" /></linearGradient></defs>
    <path d="M0 0h11.400v11.400H0zM12.600 0H24v11.400H12.600zM0 12.600h11.400V24H0zM12.600 12.600H24V24H12.600z" fill="url(#wl)" /></I>
);
const TaskView = ({ s, dark = "#222" }) => <I s={s} box="0 0 24 24"><rect x="1" y="9" width="16" height="14" rx="1" fill={dark} /><rect x="7" y="1" width="16" height="15" rx="1" fill="#f1f1f1" stroke="#cfcfcf" strokeWidth=".6" /><path d="M7 9h10v7H7z" fill="#bcbcbc" /></I>;
const Teams = ({ s }) => <I s={s} box="0 0 24 24"><path d="M12 1a11 11 0 1 1-1 22H1V12A11 11 0 0 1 12 1z" fill="#6059c5" /><rect x="5.500" y="7.500" width="9" height="9" rx="1.500" fill="#fff" /><path d="m15.500 11 3.500-2.500v7L15.500 13z" fill="#fff" /></I>;
const Explorer = ({ s }) => <I s={s} box="0 0 24 24"><path d="M0 3h9l2 2h13v5H0z" fill="#dd9f12" /><path d="M0 7h24v15H0z" fill="#fcc934" /><path d="M5 14h14v8H5z" fill="#1683cf" /><path d="M8 18h8v1.500H8z" fill="#0b559a" /></I>;
const Edge = ({ s }) => (
  <I s={s} box="0 0 24 24"><defs><linearGradient id="eg" x1="0" y1="0" x2="1" y2=".5"><stop stopColor="#1d9be2" /><stop offset="1" stopColor="#5ad65c" /></linearGradient></defs>
    <circle cx="12" cy="12" r="11.500" fill="#0d62b0" /><path d="M.600 12A11.500 11.500 0 0 1 23.500 11c.5 4-2.500 6-6 6-2.500 0-4-1-2.500-3 1-4-4-6-8-5-3 .700-5 2-6.400 3z" fill="url(#eg)" /><path d="M10 9.500c-3 3-2 8.500 2.500 10.500 3 1.400 7 .8 9-1.500C19 24 10 25 5.500 20 3 16 5 10.500 10 9.500z" fill="#1583d8" /><path d="M15 14c-1 2 1 3.500 4 3l2.500-1c-2 4-9 4.500-11 .500-1-3 .5-6 3-6 1.500 1 2 2 1.500 3.500z" fill="#d5ecf5" /></I>
);
const Word = ({ s }) => <I s={s} box="0 0 24 24"><rect x="6" y="1" width="18" height="22" rx="1.500" fill="#2b7cd3" /><path d="M6 12h18v11H6z" fill="#184fa4" /><path d="M6 6.500h18V12H6z" fill="#41a5ee" opacity=".4" /><rect y="6" width="13" height="12" rx="1" fill="#103f91" /><path d="m2.500 9 2 6.500 2-6 2 6 2-6.500" stroke="#fff" strokeWidth="1.500" /></I>;
const Code = ({ s }) => <I s={s} box="0 0 24 24"><path d="M17 1v6L3.500 17.500 1 15.500z" fill="#0f6fb7" /><path d="M1 8.500 3.500 6.500 17 17v6z" fill="#0c77c0" /><path d="m17 1 6 2.500v17L17 23z" fill="#27a2ea" /></I>;
const Chrome = ({ s }) => <I s={s} box="0 0 24 24"><circle cx="12" cy="12" r="12" fill="#e33b2e" /><path d="M1.600 6A12 12 0 0 0 12 24l5.200-9L12 12H5z" fill="#229a4c" /><path d="M22.400 6H12l5.200 9L12 24A12 12 0 0 0 22.400 6z" fill="#fcc31e" /><circle cx="12" cy="12" r="5.700" fill="#fff" /><circle cx="12" cy="12" r="4.500" fill="#397bea" /></I>;

const MINI = [
  <TaskView s={12} dark="#777" />, <Teams s={12} />, <Code s={12} />, <Explorer s={12} />,
  <I s={12}><circle cx="9" cy="8" r="6" fill="#5a4a92" /><path d="M3 6h13M3 9h13" stroke="#ddd" /><path d="M4 2a7 7 0 0 0 0 12" stroke="#e99a32" strokeWidth="1.500" /></I>,
  <I s={12}><circle cx="8" cy="8" r="8" fill="#f4f4f4" /><path d="M7 3v4H3" stroke="#36c5f0" strokeWidth="2" /><path d="M9 3v4h4" stroke="#2eb67d" strokeWidth="2" /><path d="M9 13V9h4" stroke="#ecb22e" strokeWidth="2" /><path d="M7 13V9H3" stroke="#e01e5a" strokeWidth="2" /></I>,
  <I s={12}><path d="M0 0h16v16H0z" fill="#d52d67" /><path d="M0 6 10 16H0z" fill="#1f6ef0" /><path d="M3 3h10v10H3z" fill="#161216" /><path d="M5 5h2M6 5v4M9 5h2v4H9M5 11h4" stroke="#fff" /></I>,
  <I s={12}><path d="m1 8 4 5L16 3" stroke="#3c8df0" strokeWidth="4" /></I>,
  <I s={12}><rect y="2" width="16" height="12" fill="#0b0d11" stroke="#777" /><path d="M0 3h16" stroke="#bbb" strokeWidth="2" /><path d="M4 8h8" stroke="#4c8ed8" /></I>,
  <I s={12}><path d="M2 9c0-6 13-6 13-1s-7 4-7 1 4-1 3 0M2 9c1 4 3 5 6 5" stroke="#97b52c" strokeWidth="2.500" /></I>,
  <I s={12}><circle cx="8" cy="8" r="8" fill="#f0703a" /><path d="m4 12 8-8" stroke="#fff" strokeWidth="1.700" /></I>,
  <I s={12}><rect width="16" height="16" rx="1" fill="#1c87e8" /><path d="M3 4h10M3 8h10M3 12h10" stroke="#0c3d78" strokeWidth="1.500" /></I>,
  <Word s={11} />,
  <I s={12}><rect width="16" height="16" rx="2" fill="#454545" /><path d="M12 3 4 6v2l8 2-8 3" stroke="#f59b1c" strokeWidth="2" /></I>,
  <Chrome s={12} />,
  <I s={12}><circle cx="8" cy="8" r="8" fill="#67b34e" /><path d="M4 4v4c0 5 6 4 6 0V4M10 8c0 3 1 4 3 4" stroke="#fff" strokeWidth="2" /></I>,
  <I s={12}><circle cx="8" cy="8" r="8" fill="#1662ee" /><path d="M3 8h10" stroke="#dbe7ff" strokeWidth="2.500" /></I>,
  <Edge s={12} />,
  <I s={12}><rect x="1" y="2" width="14" height="10" fill="#fff" /><path d="m8 12 6-9" stroke="#9b6c43" strokeWidth="1.500" /><path d="M4 14h6" stroke="#bbb" /></I>,
  <I s={13}><path d="M8 1c5 0 7 3 7 6s-3 2-4 3 0 5-4 5-6-4-6-7 3-7 7-7z" fill="#2b9cd0" /><circle cx="6" cy="5" r="1.500" fill="#e94f4f" /><circle cx="10" cy="4.500" r="1.500" fill="#f5d33c" /><circle cx="4.500" cy="9" r="1.500" fill="#e6e6e6" /></I>,
];
const MiniApp = styled.div`
  width: 21.750px;
  height: 24px;
  flex: none;
  display: flex;
  align-items: center;
  justify-content: center;
  background: ${(p) => (p.$run ? "linear-gradient(#b5b5b5, #b5b5b5) center bottom 2px / 4px 1px no-repeat" : "none")};
`;
const RUNNING = [2, 3, 15, 16, 17, 18, 19];

const MiniTaskbar = () => (
  <MiniBar>
    <Slot $w={23}><I s={12}><path d="M2 14c-3-3 0-6 2-5 1-5 7-4 7 0 4-1 5 4 2 5z" fill="#b9d4f5" /></I></Slot>
    <MiniTemp $w={58} $a="left">24°</MiniTemp>
    <Slot $w={26}><WinLogo s={12} /></Slot>
    <MiniSearch><I s={7}><circle cx="6" cy="6" r="5" stroke="#fff" strokeWidth="1.800" /><path d="m10 10 5 5" stroke="#fff" strokeWidth="1.800" /></I>Search</MiniSearch>
    {MINI.map((m, i) => <MiniApp key={i} $run={RUNNING.includes(i)}>{m}</MiniApp>)}
    <Slot $w={24}><I s={7}><path d="m2 11 6-6 6 6" stroke="#ddd" strokeWidth="1.800" /></I></Slot>
    <Slot $w={5}><I s={9}><path d="M2 9a6 6 0 0 1 11-4M13 8a6 6 0 0 1-10 4" stroke="#ddd" strokeWidth="1.600" /><circle cx="12" cy="12" r="3.500" fill="#f5a321" /></I></Slot>
    <Slot $w={20}><I s={9}><rect x="5.500" y="1" width="5" height="9" rx="2.500" fill="#8a7a95" /><path d="M3 8c0 6 10 6 10 0M8 13v3" stroke="#a497ad" strokeWidth="1.300" /></I></Slot>
    <Slot $w={12}><I s={9}><path d="m3 11 8-9 3 3-8 8-4 1zM4 15c4 0 2-4 6-3" stroke="#ddd" strokeWidth="1.500" /></I></Slot>
    <MiniText $w={24}>ENG<br />IN</MiniText>
    <Slot $w={12}><WifiIcon s={8} c="#eee" /></Slot>
    <Slot $w={12}><SoundIcon s={8} c="#eee" /></Slot>
    <Slot $w={13}><BatteryIcon s={8} c="#eee" /></Slot>
    <MiniText $w={36} $a="right">20:43<br />29-03-2023</MiniText>
    <Slot $w={14}><I s={8}><path d="M2 4h8l4 3-2 8H4z" fill="#eee" /><path d="m9 3 5 4" stroke="#eee" strokeWidth="2" /></I></Slot>
  </MiniBar>
);

function WifiIcon({ s = 16, c = "#1b1b1b" }) {
  return <I s={s} stroke={c} strokeWidth="1.200" strokeLinecap="round"><path d="M1 6.500C5 2 11 2 15 6.500M3.300 8.800c2.700-3 6.700-3 9.400 0M5.500 11c1.500-1.600 3.500-1.600 5 0" /><circle cx="8" cy="13" r="1" fill={c} /></I>;
}
function SoundIcon({ s = 16, c = "#1b1b1b" }) {
  return <I s={s} stroke={c} strokeWidth="1.200" strokeLinejoin="round" strokeLinecap="round"><path d="M.8 6h2.500L7 2.500v11L3.300 10H.8zM9 6c1 1.200 1 2.800 0 4M11 4c2.300 2.300 2.300 5.700 0 8M13 2.300c3.500 3 3.500 8.400 0 11.400" /></I>;
}
function BatteryIcon({ s = 16, c = "#1b1b1b" }) {
  return <I s={s}><rect x=".7" y="3.200" width="12.600" height="9.600" rx="2" stroke={c} strokeWidth="1.300" /><rect x="2.500" y="5" width="7.500" height="6" rx=".6" fill={c} /><path d="M14.800 6.500v3" stroke={c} strokeWidth="1.500" /></I>;
}

const SharedScreen = () => (
  <Video>
    <PaintTitle>
      <Slot $w={8}><I s={7}><circle cx="8" cy="8" r="7" fill="#1f6f9c" /><circle cx="10" cy="5" r="3" fill="#5cb9dc" /></I></Slot>
      <Slot $w={6} />Untitled - Paint
      <Grow />
      <Slot $w={23}><I s={5}><path d="M0 8h16" stroke="#999" strokeWidth="2" /></I></Slot>
      <Slot $w={23}><I s={6}><rect x="1" y="4" width="11" height="11" rx="3" stroke="#999" strokeWidth="2" /><path d="M5 1h10v10" stroke="#999" strokeWidth="2" /></I></Slot>
      <Slot $w={24}><I s={5}><path d="m0 0 16 16M16 0 0 16" stroke="#999" strokeWidth="2" /></I></Slot>
    </PaintTitle>
    <PaintMenu>
      <Slot $w={24}>File</Slot>
      <Slot $w={30}>View</Slot>
      <Slot $w={23}><I s={8} stroke="#444" strokeWidth="1.600"><path d="M2 2h10l2 2v10H2zM5 2v4h5V2M5 14V9h6v5" /></I></Slot>
      <Slot $w={21}><I s={9} stroke="#444" strokeWidth="1.500"><path d="M3 1v5h5M3 6c3-5 11-4 10 2-1 3-3 4-5 7" /></I></Slot>
      <Slot $w={18}><I s={9} stroke="#bbb" strokeWidth="1.500"><path d="M13 1v5H8M13 6C10 1 2 2 3 8c1 3 3 4 5 7" /></I></Slot>
    </PaintMenu>
    <PaintRibbon />
    <Workspace>
      <Sheet><Board /></Sheet>
      <HBar />
      <VBar />
    </Workspace>
    <Status>
      <Slot $w={21}><I s={6}><path d="M4 1v13l9-7z" stroke="#444" strokeWidth="2" /></I></Slot>
      <Slot $w={114}><I s={7}><rect x="1" y="1" width="14" height="14" stroke="#555" strokeWidth="1.800" strokeDasharray="3 2" /></I></Slot>
      <Slot $w={17}><I s={6}><rect x="2" y="2" width="12" height="12" stroke="#444" strokeWidth="2" /></I></Slot>
      1865 × 648px
      <Grow />
      <Slot $w={22}>100%</Slot>
      <Slot $w={18}><I s={6}><path d="M0 8h16" stroke="#444" strokeWidth="2" /></I></Slot>
      <svg width="66" height="8"><path d="M1 4h20" stroke="#8040a0" strokeWidth="1.800" /><path d="M30 4h34" stroke="#8a8a8a" strokeWidth="1.800" /><circle cx="25" cy="4" r="2.600" fill="#8040a0" /></svg>
      <Slot $w={20}><I s={6}><path d="M0 8h16M8 0v16" stroke="#444" strokeWidth="2" /></I></Slot>
    </Status>
    <MiniTaskbar />
    <PaletteBar>{TOOLS.map((t, i) => <Slot key={i} $w={22} $h={20.6}>{t}</Slot>)}</PaletteBar>
    <Share>
      <Grip><svg width="3" height="6"><path d="M.5 0v6M2.500 0v6" stroke="#bbb" strokeDasharray="1 .5" /></svg></Grip>
      biggerbluebutton.com is sharing your screen.
      <Grow />
      <StopButton>Stop sharing</StopButton>
      <Hide>Hide</Hide>
      <Slot $w={6} />
    </Share>
    <CornerPanel>
      <svg width="14" height="20"><circle cx="4" cy="9" r="3" fill="none" stroke="#888" /><rect x="2" y="0" width="12" height="20" rx="1" fill="#b3b3b3" /><path d="M9 3v4L6 5z" fill="#333" /><path d="M4 10h3v3H4z" fill="#d7b93e" /><path d="M9 10h3v3H9z" fill="#3e83b7" /><path d="M4 14h3v2H4z" fill="#c8a334" /><path d="M9 14h3v2H9z" fill="#cf9b57" /></svg>
    </CornerPanel>
  </Video>
);

const Presentation = () => (
  <Stage>
    <StageHead>
      <Slot $w={40}><I s={18} box="0 0 18 18"><path d="m12 1.500-7 7.500 7 7.500" stroke="#333" strokeWidth="1.700" /></I></Slot>
      <StageTitle>29/03/23 - 3/29/2023</StageTitle>
      <Slot $w={48}><I s={14}><path d="M6 2C4.500 7 8 11.500 14 10.500 11.500 15.500 3 15 2 9c-.5-3.500 1.500-6 4-7z" stroke="#333" strokeWidth="1.500" strokeLinejoin="round" /></I></Slot>
      <Slot $w={48}><I s={18} box="0 0 18 18"><circle cx="7.500" cy="7.500" r="6" stroke="#333" strokeWidth="1.600" /><path d="m12 12 5 5" stroke="#333" strokeWidth="1.600" /></I></Slot>
      <Slot $w={48}><I s={16} stroke="#333" strokeWidth="1.300"><path d="M7.500 2.500C4 3.500 3 7 3.500 13M.8 10.500l2.700 3 2.500-3M8.500 13.500C12 12.500 13 9 12.500 3M15.200 5.500l-2.700-3-2.500 3" /></I></Slot>
    </StageHead>
    <FullButton>
      <I s={18} box="0 0 18 18" stroke="#fff" strokeWidth="1.600"><path d="M1 6V1h5M12 1h5v5M17 12v5h-5M6 17H1v-5M1.500 1.500l5.500 5.500M16.500 1.500 11 7M16.500 16.500 11 11M1.500 16.500 7 11" /></I>
    </FullButton>
    <SharedScreen />
    <Thumbs>
      {Array.from({ length: 14 }, (_, i) => {
        const screen = i % 2 === 0;
        return (
          <ThumbItem key={i} $screen={screen} $on={i === 1 || i === 4}>
            <SlideBox $screen={screen}>{screen && <Monitor />}</SlideBox>
            {i + 1}
          </ThumbItem>
        );
      })}
    </Thumbs>
  </Stage>
);

/* ---------- player controls ---------- */
const Player = styled.div`
  height: 30px;
  flex: none;
  background: #323232;
  display: flex;
  align-items: center;
  color: #fff;
  font-family: ${WEB};
`;
const PauseButton = styled.div`
  width: 41px;
  height: 30px;
  border: 2px solid #0d0d0d;
  border-radius: 4px;
  box-shadow: 0 0 0 1px #e8e8e8;
  background: radial-gradient(circle at 19px 13px, #777 0, #3a3a3a 12px, #303030 16px);
  display: flex;
  align-items: center;
  justify-content: center;
  padding-right: 2px;
`;
const Track = styled.div`
  width: 1161px;
  height: 3px;
  margin-left: 10px;
  background: linear-gradient(90deg, #fff 172px, #718096 172px, #718096 333px, #4c5661 333px);
  display: flex;
  align-items: center;
  padding-left: 168px;
`;
const Knob = styled.div`
  width: 8px;
  height: 8px;
  border-radius: 50%;
  background: #fff;
`;
const Left = styled.div`
  width: 84px;
  text-align: center;
  font-size: 10.240px;
  font-weight: 700;
`;
const Rate = styled.div`
  width: 22px;
  text-align: center;
  font-size: 15px;
  -webkit-text-stroke: 0.250px #fff;
`;

const PlayerBar = () => (
  <Player>
    <PauseButton><I s={12} box="0 0 12 12"><path d="M3.500 1v10M8.500 1v10" stroke="#fff" strokeWidth="3" /></I></PauseButton>
    <Slot $w={38}><I s={15}><path d="M1 5h3l5-4v14l-5-4H1z" fill="#fff" /><path d="M10.500 5c2 1.500 2 4.500 0 6M11 2.500c4.500 2 4.500 9 0 11" stroke="#fff" strokeWidth="1.400" /></I></Slot>
    <Slot $w={1} />
    <Track><Knob /></Track>
    <Left>-1:48:33</Left>
    <Rate>1x</Rate>
  </Player>
);

/* ---------- Windows taskbar ---------- */
const Taskbar = styled.div`
  height: 48px;
  flex: none;
  background: #d0e8ee;
  border-top: 1px solid #b4bcc0;
  display: flex;
  align-items: center;
  padding-left: 10px;
  color: #1b1b1b;
`;
const SearchBox = styled.div`
  width: 218px;
  height: 31px;
  margin: 0 3px;
  border-radius: 16px;
  background: #eff8fa;
  border: 1px solid #bcd5db;
  display: flex;
  align-items: center;
  padding: 0 1px 2px 9px;
  font-size: 13px;
  color: #5a5f61;
  gap: 10px;
`;
const TaskApp = styled.div`
  width: ${(p) => p.$w || 44}px;
  height: 40px;
  flex: none;
  display: flex;
  align-items: center;
  justify-content: center;
  position: relative;
  padding-bottom: 1px;
  &::after {
    content: "";
    display: ${(p) => (p.$run || p.$active ? "block" : "none")};
    position: absolute;
    bottom: 1px;
    width: ${(p) => (p.$active ? 16 : 6)}px;
    height: 3px;
    border-radius: 2px;
    background: ${(p) => (p.$active ? "#23808e" : "#7c8c90")};
  }
`;
const ActiveCard = styled.div`
  width: 37px;
  height: 39px;
  background: #eaf5f8;
  border: 1px solid #dcecf0;
  border-radius: 4px;
  display: flex;
  align-items: center;
  justify-content: center;
`;
const Badge = styled.span`
  position: absolute;
  left: ${(p) => p.$x}px;
  top: ${(p) => p.$y}px;
  min-width: 15px;
  height: 15px;
  padding: 0 ${(p) => p.$p || 0}px;
  border-radius: 9px;
  background: ${(p) => p.$bg};
  color: ${(p) => p.$c || "#fff"};
  font-size: ${(p) => p.$f || 10}px;
  display: flex;
  align-items: center;
  justify-content: center;
`;
const TrayText = styled.div`
  width: ${(p) => p.$w}px;
  font-size: ${(p) => p.$f || 11.5}px;
  line-height: 16px;
  text-align: ${(p) => p.$a || "center"};
  white-space: nowrap;
  padding-bottom: 2px;
`;
const Count = styled.div`
  width: 15px;
  height: 15px;
  margin: 0 21px 0 7px;
  border-radius: 50%;
  background: #1f6b79;
  color: #fff;
  font-size: 9.500px;
  font-weight: 600;
  display: flex;
  align-items: center;
  justify-content: center;
`;

const WindowsBar = () => (
  <Taskbar>
    <TaskApp $w={45}><WinLogo s={23} /></TaskApp>
    <SearchBox>
      <I s={16} stroke="#222" strokeWidth="1.700"><circle cx="7" cy="7" r="5.500" /><path d="m11 11 4.500 4.500" /></I>
      Search
      <Grow />
      <svg width="51" height="24" viewBox="0 0 52 24" fill="none">
        <path d="M1 12C8 20 16 12 24 8c4 6 6 10 2 14C16 24 5 22 1 12z" fill="#a54dd0" opacity=".7" />
        <path d="M0 11c8 3 10 1 16 0l-2 9C7 21 3 18 0 11z" fill="#29a5dd" opacity=".7" strokeDasharray="1 1" />
        <path d="M4 21c10 3 20 2 26-2" stroke="#df45a2" strokeWidth="2" strokeDasharray="2 1" />
        <path d="M20 20c2-8 6-12 13-11l4 5c-4 5-10 7-17 6z" fill="#e98f5f" /><path d="m31 9 4-3 5 6-3 3z" fill="#e9dfd0" /><path d="m36 8 11-8 2 3-10 9z" fill="#8a5d36" />
      </svg>
    </SearchBox>
    <TaskApp><TaskView s={25} /></TaskApp>
    <TaskApp>
      <I s={27} box="0 0 24 24"><circle cx="18" cy="12" r="4" fill="#f59a3c" /><path d="M6 22c-7-2-5-9 0-9 1-7 10-7 11-1 6-1 8 8 1 10z" fill="#9cc4f2" /><path d="M6 22c-6-2-4-8 0-8 3 0 5 2 5 4 4-3 9 0 8 4z" fill="#c7ddf9" /></I>
      <Badge $x={18} $y={2} $bg="#f6fbfc" $c="#222" $p={4} $f={10.5}>31°</Badge>
    </TaskApp>
    <TaskApp><Teams s={23} /></TaskApp>
    <TaskApp><Explorer s={25} /></TaskApp>
    <TaskApp><Edge s={24} /></TaskApp>
    <TaskApp $run><Word s={25} /></TaskApp>
    <TaskApp $run>
      <FaSkype size={25} color="#0a9be9" />
      <Badge $x={24} $y={3} $bg="#ee4137">2</Badge>
    </TaskApp>
    <TaskApp $run><Code s={24} /></TaskApp>
    <TaskApp $active>
      <ActiveCard><Chrome s={24} /></ActiveCard>
      <Badge $x={24} $y={3} $bg="#5c6bc0">G</Badge>
    </TaskApp>
    <TaskApp $run>
      <I s={26} box="0 0 24 24"><rect x="3.500" y="2" width="17" height="18" fill="#3fb4cf" /><path d="M3.500 20.500h17v2h-17z" fill="#b5601e" /><path d="M6.500 8h11M6.500 12h11M6.500 16h11" stroke="#0e5c7a" strokeWidth="1.700" /><path d="M5 0v4M8 0v4M11 0v4M14 0v4M17 0v4M19.500 0v4" stroke="#1c6f84" strokeWidth="1" /></I>
    </TaskApp>
    <TaskApp $run>
      <I s={25} box="0 0 24 24"><path d="M0 9 12 0l12 9v3H0z" fill="#0b5ba8" /><path d="M4 7h16v9H4z" fill="#fff" /><path d="M0 9l12 8 12-8v14H0z" fill="#2ba9ea" /><path d="M0 23 12 14l12 9z" fill="#1888d4" /></I>
    </TaskApp>
    <Grow />
    <Slot $w={32}><I s={12}><path d="m2 11 6-6 6 6" stroke="#1b1b1b" strokeWidth="1.700" /></I></Slot>
    <Slot $w={31}><I s={16}><path d="M4 13c-4-.5-4-5 0-5.200C5 3 11 3 12 7c4.500-.3 5 5.500 1 6z" fill="#eee" stroke="#222" strokeWidth="1" /><path d="M4 8c2-5 8-4 8-1l-5 3z" fill="#777" /></I></Slot>
    <TrayText $w={45}>ENG<br />IN</TrayText>
    <Slot $w={2} />
    <Slot $w={27}><WifiIcon /></Slot>
    <Slot $w={22}><SoundIcon /></Slot>
    <Slot $w={26}><BatteryIcon /></Slot>
    <TrayText $w={73} $a="right" $f={11.8}>15:55<br />04-04-2023</TrayText>
    <Slot $w={1} />
    <Count>5</Count>
  </Taskbar>
);

export default function App() {
  return (
    <Screen>
      <Global />
      <Tabs />
      <AddressBar />
      <BookmarkBar />
      <Page>
        <ChatPanel />
        <Presentation />
      </Page>
      <PlayerBar />
      <WindowsBar />
    </Screen>
  );
}
